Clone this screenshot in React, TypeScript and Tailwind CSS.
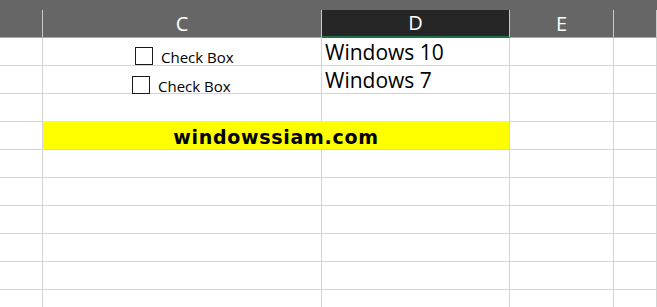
const cols = ["", "C", "D", "E", ""];
const grid = "grid grid-cols-[43px_279px_188px_104px_1fr]";
const cell = "h-[28px] border-r border-b border-[#d4d4d4]";

function CheckBox({ pos }: { pos: string }) {
  return (
    <div className={`absolute flex items-start ${pos}`}>
      <div className="w-[18px] h-[18px] border border-[#1a1a1a] bg-white" />
      <span className="ml-[8px] mt-[1px] text-[15px] leading-[18px] text-black font-['Open_Sans',sans-serif]">
        Check Box
      </span>
    </div>
  );
}

export default function App() {
  const rows = Array.from({ length: 10 });
  return (
    <div className="relative w-[657px] h-[307px] overflow-hidden bg-white font-['Open_Sans',sans-serif]">
      {/* column headers */}
      <div className="bg-[#666666] pt-[10px]">
        <div className={grid}>
          {cols.map((c, i) => (
            <div
              key={i}
              className={`h-[28px] flex items-center justify-center text-[20px] text-white border-r ${
                c === "D"
                  ? "bg-[#262626] border-b-2 border-b-[#217346] border-r-[#c8c8c8]"
                  : "border-b border-r-[#c8c8c8] border-b-[#a8a8a8]"
              }`}
            >
              {c}
            </div>
          ))}
        </div>
      </div>

      {/* sheet rows */}
      {rows.map((_, r) => (
        <div key={r} className={grid}>
          <div className={cell} />
          {r === 3 ? (
            <div className="col-span-2 h-[28px] bg-[#ffff00] border-r border-b border-[#d4d4d4] -mt-px h-[29px] flex justify-center pt-[4px] leading-[25px] text-[19px] font-bold tracking-[0.7px] text-black font-['DejaVu_Sans',sans-serif]">
              windowssiam.com
            </div>
          ) : (
            <>
              <div className={cell} />
              <div className={`${cell} pl-[3px] text-[21px] leading-[28px] text-black`}>
                {r === 0 ? "Windows 10" : r === 1 ? "Windows 7" : ""}
              </div>
            </>
          )}
          <div className={cell} />
          <div className={cell} />
        </div>
      ))}

      <CheckBox pos="left-[135px] top-[47px]" />
      <CheckBox pos="left-[132px] top-[76px]" />
    </div>
  );
}
